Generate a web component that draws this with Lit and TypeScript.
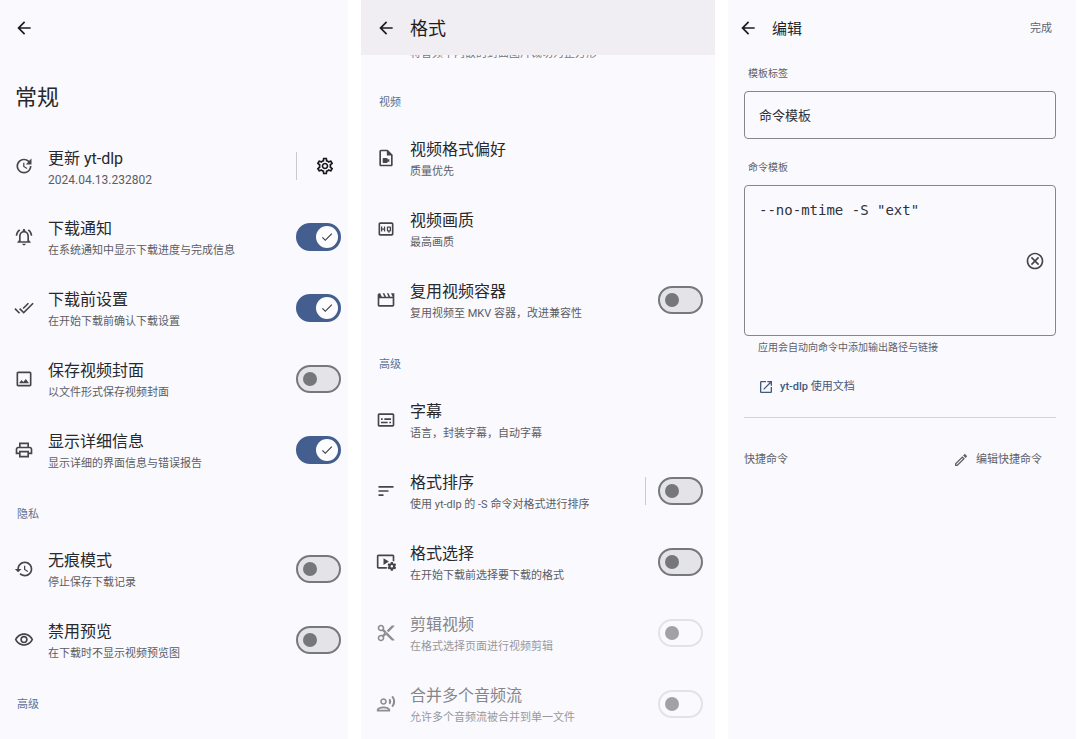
import { LitElement, html, css, svg, nothing } from "lit";
import { customElement, property } from "lit/decorators.js";

const icons: Record<string, unknown> = {
  back: svg`<path d="M20 11H7.83l5.59-5.59L12 4l-8 8 8 8 1.41-1.41L7.83 13H20v-2z"/>`,
  update: svg`<path d="M21 10.12h-6.78l2.74-2.82c-2.73-2.7-7.15-2.8-9.88-.1-2.73 2.71-2.73 7.08 0 9.79s7.15 2.71 9.88 0C18.32 15.65 19 14.08 19 12.1h2c0 1.98-.88 4.55-2.64 6.29-3.51 3.48-9.21 3.48-12.72 0-3.5-3.47-3.53-9.11-.02-12.58s9.14-3.47 12.65 0L21 3v7.12zM12.5 8v4.25l3.5 2.08-.72 1.21L11 13V8h1.5z"/>`,
  gear: svg`<path d="M19.43 12.98c.04-.32.07-.64.07-.98 0-.34-.03-.66-.07-.98l2.11-1.65c.19-.15.24-.42.12-.64l-2-3.46c-.09-.16-.26-.25-.44-.25-.06 0-.12.01-.17.03l-2.49 1c-.52-.4-1.08-.73-1.69-.98l-.38-2.65C14.46 2.18 14.25 2 14 2h-4c-.25 0-.46.18-.49.42l-.38 2.65c-.61.25-1.17.59-1.69.98l-2.49-1c-.06-.02-.12-.03-.18-.03-.17 0-.34.09-.43.25l-2 3.46c-.13.22-.07.49.12.64l2.11 1.65c-.04.32-.07.65-.07.98 0 .33.03.66.07.98l-2.11 1.65c-.19.15-.24.42-.12.64l2 3.46c.09.16.26.25.44.25.06 0 .12-.01.17-.03l2.49-1c.52.4 1.08.73 1.69.98l.38 2.65c.03.24.24.42.49.42h4c.25 0 .46-.18.49-.42l.38-2.65c.61-.25 1.17-.59 1.69-.98l2.49 1c.06.02.12.03.18.03.17 0 .34-.09.43-.25l2-3.46c.12-.22.07-.49-.12-.64l-2.11-1.65zm-1.98-1.71c.04.31.05.52.05.73 0 .21-.02.43-.05.73l-.14 1.13.89.7 1.08.84-.7 1.21-1.27-.51-1.04-.42-.9.68c-.43.32-.84.56-1.25.73l-1.06.43-.16 1.13-.2 1.35h-1.4l-.19-1.35-.16-1.13-1.06-.43c-.43-.18-.83-.41-1.23-.71l-.91-.7-1.06.43-1.27.51-.7-1.21 1.08-.84.89-.7-.14-1.13c-.03-.31-.05-.54-.05-.74s.02-.43.05-.73l.14-1.13-.89-.7-1.08-.84.7-1.21 1.27.51 1.04.42.9-.68c.43-.32.84-.56 1.25-.73l1.06-.43.16-1.13.2-1.35h1.39l.19 1.35.16 1.13 1.06.43c.43.18.83.41 1.23.71l.91.7 1.06-.43 1.27-.51.7 1.21-1.07.85-.89.7.14 1.13zM12 8c-2.21 0-4 1.79-4 4s1.79 4 4 4 4-1.79 4-4-1.79-4-4-4zm0 6c-1.1 0-2-.9-2-2s.9-2 2-2 2 .9 2 2-.9 2-2 2z"/>`,
  bell: svg`<path d="M12 22c1.1 0 2-.9 2-2h-4c0 1.1.9 2 2 2zm6-6v-5c0-3.07-1.63-5.64-4.5-6.32V4c0-.83-.67-1.5-1.5-1.5s-1.5.67-1.5 1.5v.68C7.64 5.36 6 7.92 6 11v5l-2 2v1h16v-1l-2-2zm-2 1H8v-6c0-2.48 1.51-4.5 4-4.5s4 2.02 4 4.5v6zM7.58 4.08 6.15 2.65C3.75 4.48 2.17 7.3 2.03 10.5h2c.15-2.65 1.51-4.97 3.55-6.42zm12.39 6.42h2c-.15-3.2-1.73-6.02-4.12-7.85l-1.42 1.43c2.02 1.45 3.39 3.77 3.54 6.42z"/>`,
  doneall: svg`<path d="m18 7-1.41-1.41-6.34 6.34 1.41 1.41L18 7zm4.24-1.41L11.66 16.17 7.48 12l-1.41 1.41L11.66 19l12-12-1.42-1.41zM.41 13.41 6 19l1.41-1.41L1.83 12 .41 13.41z"/>`,
  image: svg`<path d="M19 5v14H5V5h14m0-2H5c-1.1 0-2 .9-2 2v14c0 1.1.9 2 2 2h14c1.1 0 2-.9 2-2V5c0-1.1-.9-2-2-2zm-4.86 8.86-3 3.87L9 13.14 6 17h12l-3.86-5.14z"/>`,
  print: svg`<path d="M19 8h-1V3H6v5H5c-1.66 0-3 1.34-3 3v6h4v4h12v-4h4v-6c0-1.66-1.34-3-3-3zM8 5h8v3H8V5zm8 12v2H8v-4h8v2zm2-2v-2H6v2H4v-4c0-.55.45-1 1-1h14c.55 0 1 .45 1 1v4h-2z"/>`,
  history: svg`<path d="M13 3c-4.97 0-9 4.03-9 9H1l3.89 3.89.07.14L9 12H6c0-3.87 3.13-7 7-7s7 3.13 7 7-3.13 7-7 7c-1.93 0-3.68-.79-4.94-2.06l-1.42 1.42C8.27 19.99 10.51 21 13 21c4.97 0 9-4.03 9-9s-4.03-9-9-9zm-1 5v5l4.28 2.54.72-1.21-3.5-2.08V8H12z"/>`,
  eye: svg`<path d="M12 6c3.79 0 7.17 2.13 8.82 5.5C19.17 14.87 15.79 17 12 17s-7.17-2.13-8.82-5.5C4.83 8.13 8.21 6 12 6m0-2C7 4 2.73 7.11 1 11.5 2.73 15.89 7 19 12 19s9.27-3.11 11-7.5C21.27 7.11 17 4 12 4zm0 5c1.38 0 2.5 1.12 2.5 2.5S13.38 14 12 14s-2.5-1.12-2.5-2.5S10.62 9 12 9m0-2c-2.48 0-4.5 2.02-4.5 4.5S9.52 16 12 16s4.5-2.02 4.5-4.5S14.48 7 12 7z"/>`,
  videofile: svg`<path d="M14 2H6c-1.1 0-2 .9-2 2v16c0 1.1.89 2 1.99 2H18c1.1 0 2-.9 2-2V8l-6-6zM6 20V4h7v5h5v11H6zm8-6 2-1.06v4.12L14 16v1c0 .55-.45 1-1 1H9c-.55 0-1-.45-1-1v-4c0-.55.45-1 1-1h4c.55 0 1 .45 1 1v1z"/>`,
  hq: svg`<path d="M19 4H5c-1.11 0-2 .9-2 2v12c0 1.1.89 2 2 2h14c1.1 0 2-.9 2-2V6c0-1.1-.9-2-2-2zm0 14H5V6h14v12zM7.5 13h2v2H11V9H9.5v2.5h-2V9H6v6h1.5zm6.5 2h.75v1.5h1.5V15H17c.55 0 1-.45 1-1v-4c0-.55-.45-1-1-1h-3c-.55 0-1 .45-1 1v4c0 .55.45 1 1 1zm.5-4.5h2v3h-2v-3z"/>`,
  movie: svg`<path d="m18 4 2 4h-3l-2-4h-2l2 4h-3l-2-4H8l2 4H7L5 4H4c-1.1 0-1.99.9-1.99 2L2 18c0 1.1.9 2 2 2h16c1.1 0 2-.9 2-2V4h-4zM4 18V10h16v8H4z"/>`,
  subtitles: svg`<path d="M20 4H4c-1.1 0-2 .9-2 2v12c0 1.1.9 2 2 2h16c1.1 0 2-.9 2-2V6c0-1.1-.9-2-2-2zm0 14H4V6h16v12zM6 10h2v2H6zm0 4h8v2H6zm10 0h2v2h-2zm-6-4h8v2h-8z"/>`,
  sort: svg`<path d="M3 18h6v-2H3v2zM3 6v2h18V6H3zm0 7h12v-2H3v2z"/>`,
  videogear: svg`<path d="M13 20H3c-1.1 0-2-.9-2-2V5c0-1.1.9-2 2-2h17c1.1 0 2 .9 2 2v6h-2V5H3v13h10zM9 7.5v8l6.5-4z"/><path fill-rule="evenodd" d="m17.8 12-.3 1.5-1 .6-1.5-.5-1.2 2 1.1 1v1.2l-1.1 1 1.2 2 1.5-.5 1 .6.3 1.5h2.4l.3-1.5 1-.6 1.5.5 1.2-2-1.1-1v-1.2l1.1-1-1.2-2-1.5.5-1-.6-.3-1.5zM19 15.7a1.5 1.5 0 1 1 0 3 1.5 1.5 0 0 1 0-3z"/>`,
  cut: svg`<path d="M9.64 7.64c.23-.5.36-1.05.36-1.64 0-2.21-1.79-4-4-4S2 3.79 2 6s1.79 4 4 4c.59 0 1.14-.13 1.64-.36L10 12l-2.36 2.36C7.14 14.13 6.59 14 6 14c-2.21 0-4 1.79-4 4s1.79 4 4 4 4-1.79 4-4c0-.59-.13-1.14-.36-1.64L12 14l7 7h3v-1L9.64 7.64zM6 8c-1.1 0-2-.89-2-2s.9-2 2-2 2 .89 2 2-.9 2-2 2zm0 12c-1.1 0-2-.89-2-2s.9-2 2-2 2 .89 2 2-.9 2-2 2zm6-7.5c-.28 0-.5-.22-.5-.5s.22-.5.5-.5.5.22.5.5-.22.5-.5.5zM19 3l-6 6 2 2 7-7V3z"/>`,
  voice: svg`<path d="M9 13c2.21 0 4-1.79 4-4s-1.79-4-4-4-4 1.79-4 4 1.79 4 4 4zm0-6c1.1 0 2 .9 2 2s-.9 2-2 2-2-.9-2-2 .9-2 2-2zm0 8c-2.67 0-8 1.34-8 4v2h16v-2c0-2.66-5.33-4-8-4zm-6 4c.22-.72 3.31-2 6-2 2.7 0 5.8 1.29 6 2H3zM15.08 7.05c.84 1.18.84 2.71 0 3.89l1.68 1.69c2.02-2.02 2.02-5.07 0-7.27l-1.68 1.69zM20.07 2l-1.63 1.63c2.77 3.02 2.77 7.56 0 10.74L20.07 16c3.9-3.89 3.91-9.95 0-14z"/>`,
  check: svg`<path d="M9 16.17 4.83 12l-1.42 1.41L9 19 21 7l-1.41-1.41z"/>`,
  cancel: svg`<path d="M12 2C6.47 2 2 6.47 2 12s4.47 10 10 10 10-4.47 10-10S17.53 2 12 2zm0 18c-4.41 0-8-3.59-8-8s3.59-8 8-8 8 3.59 8 8-3.59 8-8 8zm3.59-13L12 10.59 8.41 7 7 8.41 10.59 12 7 15.59 8.41 17 12 13.41 15.59 17 17 15.59 13.41 12 17 8.41z"/>`,
  open: svg`<path d="M19 19H5V5h7V3H5c-1.11 0-2 .9-2 2v14c0 1.1.89 2 2 2h14c1.1 0 2-.9 2-2v-7h-2v7zM14 3v2h3.59l-9.83 9.83 1.41 1.41L19 6.41V10h2V3h-7z"/>`,
  edit: svg`<path fill-rule="evenodd" d="m14.06 9.02.92.92L5.92 19H5v-.92l9.06-9.06M17.66 3c-.25 0-.51.1-.7.29l-1.83 1.83 3.75 3.75 1.83-1.83c.39-.39.39-1.02 0-1.41l-2.34-2.34c-.2-.2-.45-.29-.71-.29zm-3.6 3.19L3 17.25V21h3.75L17.81 9.94l-3.75-3.75z"/>`,
};

const icon = (name: string) =>
  html`<svg class="icon ${name}" viewBox="0 0 24 24" aria-hidden="true">${icons[name]}</svg>`;

const base = css`
  * { box-sizing: border-box; }
  .icon { display: block; width: 20px; height: 20px; fill: currentColor; flex: none; }
  button { border: 0; padding: 0; background: none; font: inherit; color: inherit; cursor: pointer; }
`;

@customElement("setting-row")
class SettingRow extends LitElement {
  @property() icon = "";
  @property() heading = "";
  @property() detail = "";
  @property() toggle = "";
  @property({ type: Boolean }) divided = false;
  @property({ type: Boolean }) disabled = false;
  @property({ type: Boolean }) settings = false;

  static styles = [base, css`
    :host { display: block; }
    .row { display: flex; align-items: center; height: 71px; padding: 0 var(--row-end, 12px) 0 var(--row-start, 15px); color: #45464c; }
    .row.disabled { color: #8d8d92; }
    .text { display: flex; flex-direction: column; flex: 1; min-width: 0; margin-left: 14px; padding-top: 6px; }
    .title { font-size: 16px; line-height: 22px; color: #28292d; }
    .detail { font-size: 11px; line-height: 22px; color: #5c5d62; }
    .version { font-size: 12px; line-height: 20px; }
    .disabled .title { color: #85868a; }
    .disabled .detail { color: #98989c; }
    .divider { width: 1px; height: 28px; background: #c9c9cf; margin-right: 12px; }
    .gear-button { padding: 6px; color: #17181c; }
    .switch { display: grid; align-items: center; flex: none; }
    .switch > * { grid-area: 1 / 1; }
    .switch input {
      appearance: none; display: flex; align-items: center; margin: 0; width: 45px; height: 28px;
      border: 2px solid #77787c; border-radius: 14px; background: #e3e3e8; padding: 0 5px;
    }
    .switch input::before { content: ""; width: 14px; height: 14px; border-radius: 50%; background: #75777a; }
    .switch input:checked { border-color: #435e8f; background: #435e8f; justify-content: flex-end; padding: 0 1px; }
    .switch input:checked::before { width: 22px; height: 22px; background: #fdfcff; }
    .switch input:disabled { border-color: #e3e3e7; background: #faf9fd; }
    .switch input:disabled::before { background: #a2a2a6; }
    .switch .check { width: 14px; height: 14px; justify-self: end; margin-right: 7px; color: #3c3f45; pointer-events: none; }
  `];

  render() {
    return html`
      <div class="row ${this.disabled ? "disabled" : ""}">
        ${icon(this.icon)}
        <label class="text" for="control">
          <span class="title">${this.heading}</span>
          <span class="detail ${this.settings ? "version" : ""}">${this.detail}</span>
        </label>
        ${this.divided ? html`<span class="divider"></span>` : nothing}
        ${this.settings ? html`<button id="control" class="gear-button" aria-label="设置">${icon("gear")}</button>` : nothing}
        ${this.toggle
          ? html`<span class="switch">
              <input id="control" type="checkbox" role="switch" .checked=${this.toggle === "on"} ?disabled=${this.disabled} />
              ${this.toggle === "on" ? icon("check") : nothing}
            </span>`
          : nothing}
      </div>
    `;
  }
}

@customElement("app-root")
class AppRoot extends LitElement {
  static styles = [base, css`
    :host {
      display: block; height: 100vh; overflow: hidden; background: #fff; color: #28292d;
      font-family: Roboto, "Noto Sans CJK SC", sans-serif;
    }
    .screens { display: grid; grid-template-columns: 348fr 354fr 348fr; gap: 13px; height: 100%; padding-right: 4px; }
    .screen { background: #faf9fe; overflow: hidden; min-width: 0; }
    .bar { display: flex; align-items: center; height: 55px; padding: 0 15px; color: #1c1d21; }
    h1, h2 { margin: 0; font-weight: 400; }
    .bar h1, .done { padding-top: 2px; }
    .general { --row-start: 14px; --row-end: 7px; }
    .general .bar { padding: 0 14px; }
    .general > h1 { padding: 25px 15px 14px; font-size: 22px; line-height: 36px; color: #28292d; }
    .section { padding: 12px 17px 0; font-size: 11px; line-height: 36px; color: #5d7191; }
    .formats .bar { background: #f0eef3; }
    .formats h1 { font-size: 18px; line-height: 28px; margin-left: 14px; }
    .clipped { display: flex; align-items: flex-end; height: 8px; overflow: hidden; padding-left: 49px; font-size: 11px; line-height: 18px; color: #77787c; }
    .formats .section { padding: 12px 18px 1px; }
    .formats .section.first { padding-top: 22px; }
    .editor .bar { padding: 0 24px 0 10px; }
    .editor h1 { font-size: 15px; line-height: 24px; margin-left: 14px; flex: 1; }
    .done { font-size: 11px; line-height: 20px; color: #5c6470; }
    .form { padding: 9px 20px 0 16px; }
    .field-label { display: block; padding: 0 4px; font-size: 10px; line-height: 20px; color: #606167; }
    .box { display: flex; align-items: center; margin: 7px 0 19px; border: 1px solid #85868c; border-radius: 4px; }
    .box input, .box textarea {
      flex: 1; min-width: 0; border: 0; outline: 0; background: none; margin: 0; padding: 14px 14px 12px;
      font: 13px/20px Roboto, "Noto Sans CJK SC", sans-serif; color: #303136;
    }
    .box textarea { height: 149px; resize: none; font-family: "DejaVu Sans Mono", monospace; font-size: 14px; }
    .box.code { margin-bottom: 2px; }
    .clear { margin-right: 10px; color: #45464c; }
    .hint { margin: 0; padding: 0 14px; font-size: 10px; line-height: 20px; color: #606167; }
    .link { display: flex; align-items: center; gap: 6px; width: fit-content; padding: 19px 14px 20px; font-size: 11px; line-height: 20px; color: #45597b; text-decoration: none; font-weight: 500; }
    .link .icon, .edit .icon { width: 16px; height: 16px; }
    .link .cjk { font-weight: 400; }
    .shortcuts { display: flex; justify-content: space-between; align-items: center; border-top: 1px solid #d3d3d8; padding: 32px 14px 0 0; font-size: 11px; line-height: 20px; color: #606167; }
    .shortcuts h2 { font-size: 11px; }
    .edit { display: flex; align-items: center; gap: 7px; }
  `];

  render() {
    return html`
      <main class="screens">
        <section class="screen general">
          <header class="bar"><button aria-label="返回">${icon("back")}</button></header>
          <h1>常规</h1>
          <setting-row icon="update" heading="更新 yt-dlp" detail="2024.04.13.232802" divided settings></setting-row>
          <setting-row icon="bell" heading="下载通知" detail="在系统通知中显示下载进度与完成信息" toggle="on"></setting-row>
          <setting-row icon="doneall" heading="下载前设置" detail="在开始下载前确认下载设置" toggle="on"></setting-row>
          <setting-row icon="image" heading="保存视频封面" detail="以文件形式保存视频封面" toggle="off"></setting-row>
          <setting-row icon="print" heading="显示详细信息" detail="显示详细的界面信息与错误报告" toggle="on"></setting-row>
          <h2 class="section">隐私</h2>
          <setting-row icon="history" heading="无痕模式" detail="停止保存下载记录" toggle="off"></setting-row>
          <setting-row icon="eye" heading="禁用预览" detail="在下载时不显示视频预览图" toggle="off"></setting-row>
          <h2 class="section">高级</h2>
        </section>

        <section class="screen formats">
          <header class="bar"><button aria-label="返回">${icon("back")}</button><h1>格式</h1></header>
          <div class="clipped">将音频中内嵌的封面图片裁切为正方形</div>
          <h2 class="section first">视频</h2>
          <setting-row icon="videofile" heading="视频格式偏好" detail="质量优先"></setting-row>
          <setting-row icon="hq" heading="视频画质" detail="最高画质"></setting-row>
          <setting-row icon="movie" heading="复用视频容器" detail="复用视频至 MKV 容器，改进兼容性" toggle="off"></setting-row>
          <h2 class="section">高级</h2>
          <setting-row icon="subtitles" heading="字幕" detail="语言，封装字幕，自动字幕"></setting-row>
          <setting-row icon="sort" heading="格式排序" detail="使用 yt-dlp 的 -S 命令对格式进行排序" toggle="off" divided></setting-row>
          <setting-row icon="videogear" heading="格式选择" detail="在开始下载前选择要下载的格式" toggle="off"></setting-row>
          <setting-row icon="cut" heading="剪辑视频" detail="在格式选择页面进行视频剪辑" toggle="off" disabled></setting-row>
          <setting-row icon="voice" heading="合并多个音频流" detail="允许多个音频流被合并到单一文件" toggle="off" disabled></setting-row>
        </section>

        <section class="screen editor">
          <header class="bar">
            <button aria-label="返回">${icon("back")}</button>
            <h1>编辑</h1>
            <button class="done">完成</button>
          </header>
          <div class="form">
            <label class="field-label" for="name">模板标签</label>
            <div class="box"><input id="name" type="text" .value=${"命令模板"} /></div>
            <label class="field-label" for="template">命令模板</label>
            <div class="box code">
              <textarea id="template" spellcheck="false" .value=${'--no-mtime -S "ext"'}></textarea>
              <button class="clear" aria-label="清除">${icon("cancel")}</button>
            </div>
            <p class="hint">应用会自动向命令中添加输出路径与链接</p>
            <a class="link" href="#docs">${icon("open")}<span>yt-dlp <span class="cjk">使用文档</span></span></a>
            <div class="shortcuts">
              <h2>快捷命令</h2>
              <button class="edit">${icon("edit")}<span>编辑快捷命令</span></button>
            </div>
          </div>
        </section>
      </main>
    `;
  }
}
